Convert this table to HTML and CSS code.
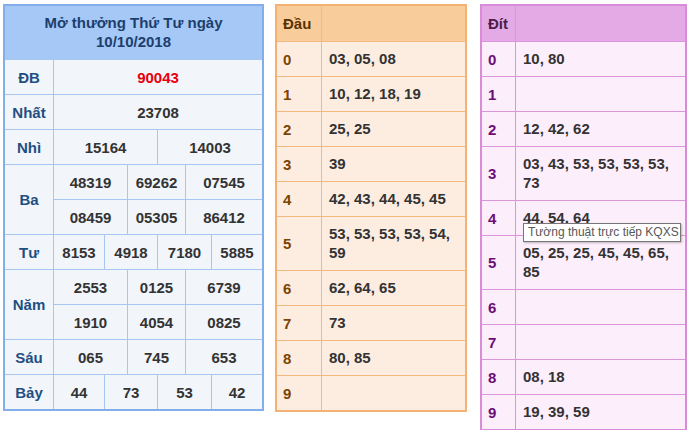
FILE: index.html
```html
<!DOCTYPE html>
<html lang="vi">
<head>
<meta charset="utf-8">
<title>KQXS</title>
<link rel="stylesheet" href="styles.css">
</head>
<body>
<div class="page">
  <div class="kq">
    <div class="kq-head">Mở thưởng Thứ Tư ngày<br>10/10/2018</div>

    <div class="lbl">ĐB</div>
    <div class="v s6 red">90043</div>

    <div class="lbl">Nhất</div>
    <div class="v s6">23708</div>

    <div class="lbl">Nhì</div>
    <div class="v s3">15164</div>
    <div class="v s3">14003</div>

    <div class="lbl r2">Ba</div>
    <div class="v s2">48319</div>
    <div class="v s2">69262</div>
    <div class="v s2">07545</div>
    <div class="v s2">08459</div>
    <div class="v s2">05305</div>
    <div class="v s2">86412</div>

    <div class="lbl">Tư</div>
    <div class="v">8153</div>
    <div class="v s2">4918</div>
    <div class="v s2">7180</div>
    <div class="v">5885</div>

    <div class="lbl r2">Năm</div>
    <div class="v s2">2553</div>
    <div class="v s2">0125</div>
    <div class="v s2">6739</div>
    <div class="v s2">1910</div>
    <div class="v s2">4054</div>
    <div class="v s2">0825</div>

    <div class="lbl">Sáu</div>
    <div class="v s2">065</div>
    <div class="v s2">745</div>
    <div class="v s2">653</div>

    <div class="lbl">Bảy</div>
    <div class="v">44</div>
    <div class="v s2">73</div>
    <div class="v s2">53</div>
    <div class="v">42</div>
  </div>

  <div class="lt dau">
    <div class="lt-h">Đầu</div><div class="lt-h"></div>
    <div class="k">0</div><div class="d">03, 05, 08</div>
    <div class="k">1</div><div class="d">10, 12, 18, 19</div>
    <div class="k">2</div><div class="d">25, 25</div>
    <div class="k">3</div><div class="d">39</div>
    <div class="k">4</div><div class="d">42, 43, 44, 45, 45</div>
    <div class="k">5</div><div class="d">53, 53, 53, 53, 54, 59</div>
    <div class="k">6</div><div class="d">62, 64, 65</div>
    <div class="k">7</div><div class="d">73</div>
    <div class="k">8</div><div class="d">80, 85</div>
    <div class="k">9</div><div class="d"></div>
  </div>

  <div class="lt dit">
    <div class="lt-h">Đít</div><div class="lt-h"></div>
    <div class="k">0</div><div class="d">10, 80</div>
    <div class="k">1</div><div class="d"></div>
    <div class="k">2</div><div class="d">12, 42, 62</div>
    <div class="k">3</div><div class="d">03, 43, 53, 53, 53, 53, 73</div>
    <div class="k">4</div><div class="d">44, 54, 64</div>
    <div class="k">5</div><div class="d">05, 25, 25, 45, 45, 65, 85</div>
    <div class="k">6</div><div class="d"></div>
    <div class="k">7</div><div class="d"></div>
    <div class="k">8</div><div class="d">08, 18</div>
    <div class="k">9</div><div class="d">19, 39, 59</div>
  </div>

  <div class="tooltip">Tường thuật trực tiếp KQXS</div>
</div>
</body>
</html>
```
FILE: styles.css
```css
html, body {
  margin: 0;
  padding: 0;
  background: #ffffff;
}
body {
  font-family: "Liberation Sans", Arial, sans-serif;
  font-size: 15px;
  font-weight: bold;
  line-height: 19px;
  color: #333333;
}
.page {
  position: relative;
  display: flex;
  align-items: flex-start;
  padding: 4px 0 0 3px;
}

/* left result table */
.kq {
  display: grid;
  grid-template-columns: 48px 50px 22px 29px 27px 25px 50px;
  grid-template-rows: 53px;
  grid-auto-rows: 34px;
  gap: 1px;
  background: #a9c6f0;
  border: 2px solid #84aeea;
  width: 257px;
}
.kq-head {
  grid-column: 1 / -1;
  box-sizing: border-box;
  padding-top: 7px;
  background: #a5c8f7;
  color: #1d3e6c;
  text-align: center;
}
.lbl {
  background: #f2f5fa;
  color: #1f4f82;
  display: flex;
  align-items: center;
  justify-content: center;
}
.lbl.r2 { grid-row: span 2; }
.v {
  background: #f2f5fa;
  display: flex;
  align-items: center;
  justify-content: center;
  color: #333333;
}
.v.s2 { grid-column: span 2; }
.v.s3 { grid-column: span 3; }
.v.s6 { grid-column: span 6; }
.v.red { color: #e8000b; }

/* loto tables */
.lt {
  display: grid;
  gap: 1px;
  grid-template-rows: 35px;
  grid-auto-rows: minmax(34px, auto);
  border: 2px solid;
}
.dau {
  margin-left: 11px;
  grid-template-columns: 44px 143px;
  background: #f3b97f;
  border-color: #f3b173;
}
.dit {
  margin-left: 13px;
  grid-template-columns: 33px 169px;
  background: #dc95dc;
  border-color: #d98bd8;
}
.lt-h {
  display: flex;
  align-items: center;
  padding-left: 6px;
}
.dau .lt-h { background: #f9cc9c; color: #5a3200; }
.dit .lt-h { background: #e3aae6; color: #4a1c4a; }
.k {
  display: flex;
  align-items: center;
  padding-left: 6px;
}
.d {
  display: flex;
  align-items: center;
  padding: 7px 7px 8px 7px;
  box-sizing: border-box;
}
.dau .k { background: #fdede1; color: #7d4300; }
.dau .d { background: #fdede1; }
.dit .k { background: #fdeefc; color: #6a0f78; }
.dit .d { background: #fdeefc; }

.tooltip {
  position: absolute;
  left: 523px;
  top: 223px;
  width: 158px;
  height: 19px;
  box-sizing: border-box;
  border: 1px solid #767676;
  background: #ffffff;
  box-shadow: 1px 1px 2px rgba(0,0,0,0.25);
  font-family: "Liberation Sans", Arial, sans-serif;
  font-weight: normal;
  font-size: 12px;
  line-height: 17px;
  color: #575757;
  padding-left: 4px;
  white-space: nowrap;
}
```
